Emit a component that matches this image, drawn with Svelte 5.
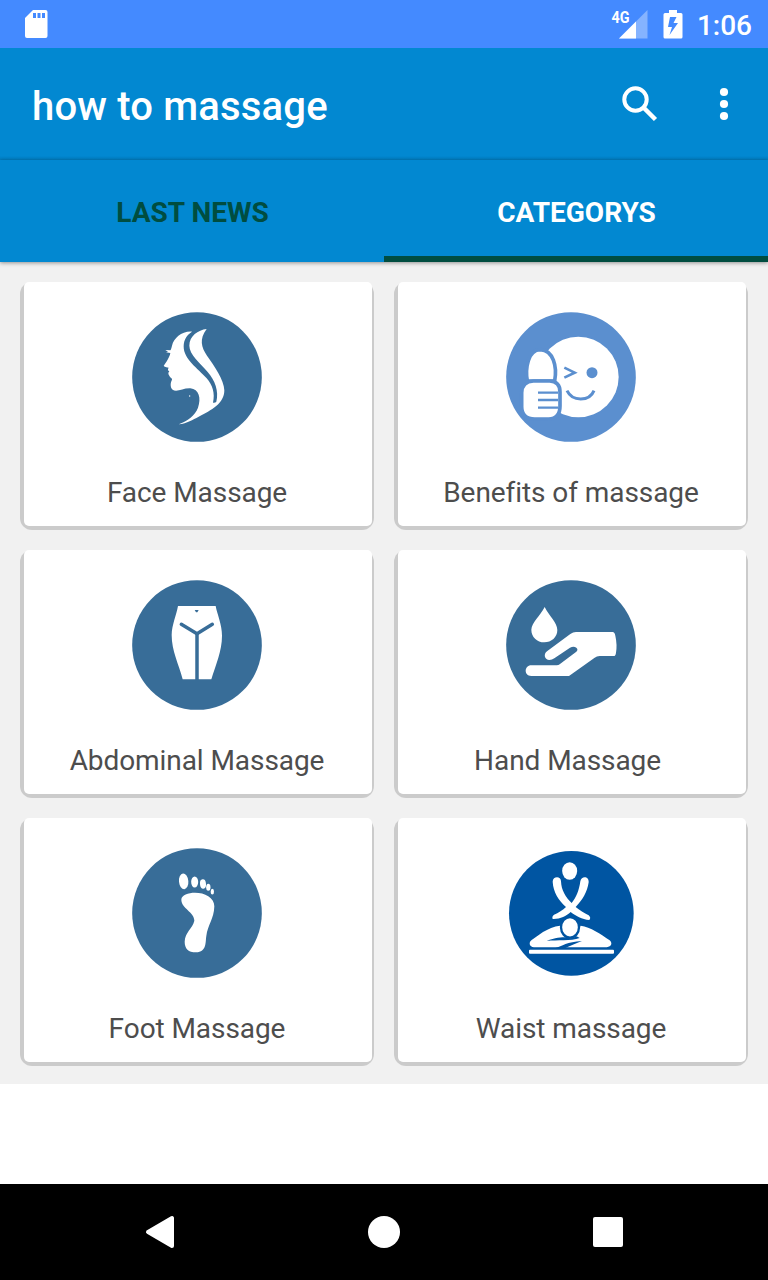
<script>
  const tabs = [
    { label: 'LAST NEWS', active: false },
    { label: 'CATEGORYS', active: true },
  ]

  const categories = [
    { name: 'Face Massage', icon: 'face' },
    { name: 'Benefits of massage', icon: 'benefits' },
    { name: 'Abdominal Massage', icon: 'abdominal' },
    { name: 'Hand Massage ', icon: 'hand' },
    { name: 'Foot Massage', icon: 'foot' },
    { name: 'Waist massage', icon: 'waist' },
  ]
</script>

<div class="screen">
  <div class="status-bar">
    <svg class="sd" width="24" height="30" viewBox="0 0 24 30">
      <path fill="#fff" fill-rule="evenodd" d="M9 1H21.500Q23.500 1 23.500 3V27Q23.500 29 21.500 29H3Q1 29 1 27V9ZM9 4V9H12V4ZM13.500 4V9H16.500V4ZM18 4V9H21V4Z" />
    </svg>
    <div class="status-right">
      <svg width="38" height="32" viewBox="0 0 38 32">
        <path fill="#fff" opacity=".35" d="M36.500 2V30.500H8Z" />
        <path fill="#fff" d="M25 13.500V30.500H8Z" />
        <text x="0.500" y="14.500" textLength="18" lengthAdjust="spacingAndGlyphs">4G</text>
      </svg>
      <svg class="battery" width="20" height="30" viewBox="0 0 20 30">
        <path fill="#fff" fill-rule="evenodd" d="M6 1H14V4H18Q19.500 4 19.500 5.500V28Q19.500 29.500 18 29.500H2Q.5 29.500 .5 28V5.500Q.5 4 2 4H6ZM7 8L5 18H9L6.500 26L15 14H10.500L13.500 8Z" />
      </svg>
      <span class="clock">1:06</span>
    </div>
  </div>

  <header class="toolbar">
    <h1>how to massage</h1>
    <svg class="search" width="38" height="38" viewBox="0 0 38 38" fill="none" stroke="#fff">
      <circle cx="14.500" cy="14.500" r="11.200" stroke-width="4" />
      <path stroke-width="4.500" d="M23 23L34.500 34.500" />
    </svg>
    <svg width="10" height="34" viewBox="0 0 10 34" fill="#fff">
      <circle cx="5" cy="5" r="4.100" />
      <circle cx="5" cy="17" r="4.100" />
      <circle cx="5" cy="29" r="4.100" />
    </svg>
  </header>

  <nav class="tabs">
    {#each tabs as tab}
      <div class="tab" class:active={tab.active}>{tab.label}</div>
    {/each}
  </nav>

  <main class="grid">
    {#each categories as category}
      <div class="card">
        <div class="card-body">
          <svg width="154" height="154" viewBox="0 0 462 462">
            {#if category.icon === 'face'}
              <circle cx="231" cy="231" r="194.500" fill="#386d98" />
              <path fill="#fff" d="M216 95C185 93 162 114 156 137C154 145 153 149 151 151L136 150L144 155L138 157L151 159C149 172 138 187 131 198C135 202 143 202 146 203C142 208 144 212 148 214C143 218 145 225 149 229C149 233 157 234 156 239C151 248 150 262 158 269C170 278 189 264 211 265C237 267 244 295 234 323C226 346 202 363 176 373C202 370 218 359 236 350C274 331 313 311 313 271C312 240 283 197 261 167C244 142 237 117 260 87C234 90 208 108 208 137C208 164 241 190 263 216C285 241 297 274 289 305Q286 309 279 308C286 280 277 254 260 235C235 207 190 177 191 139C191 118 202 104 216 95Z" />
              <circle cx="209" cy="288" r="2" fill="#fff" />
            {:else if category.icon === 'benefits'}
              <circle cx="231" cy="231" r="194.500" fill="#5b8fcf" />
              <circle cx="253" cy="231" r="121" fill="#fff" />
              <path fill="#fff" stroke="#5b8fcf" stroke-width="11" d="M100 243C93 205 102 149 139 149C178 151 190 200 182 243Z" />
              <path fill="#fff" stroke="#5b8fcf" stroke-width="11" d="M118 243H167Q198 244 198 276V318Q198 357 164 357H122Q83 356 83 320V278Q84 245 118 243Z" />
              <g fill="none" stroke="#5b8fcf" stroke-width="7">
                <path d="M132 278H192M132 300H192M132 323H192" />
                <path stroke-width="8" d="M211 203L242 218L211 233" />
                <path stroke-width="9" d="M219 272Q231 297 260 297Q290 297 300 272" />
              </g>
              <circle cx="294" cy="218" r="16.500" fill="#5b8fcf" />
            {:else if category.icon === 'abdominal'}
              <circle cx="231" cy="231" r="194.500" fill="#386d98" />
              <path fill="#fff" d="M174 114H287C292 141 306 169 306 203C306 249 287 291 274 334H188C176 287 155 249 155 201C156 169 169 143 174 114Z" />
              <g fill="none" stroke="#386d98" stroke-width="10.500" stroke-linecap="round" stroke-linejoin="round">
                <path d="M184 169L231 197L277 169" />
                <path stroke-linecap="butt" d="M231 197V336" />
              </g>
              <path fill="#386d98" d="M224 126H236L232 133H228Z" />
            {:else if category.icon === 'hand'}
              <circle cx="231" cy="231" r="194.500" fill="#386d98" />
              <path fill="#fff" d="M152 117C165 144 190 163 190 186C190 208 172 223 151 223C129 223 112 207 112 185C113 163 140 142 152 117Z" />
              <path fill="#fff" d="M356 192H246Q237 192 229 198L160 249C146 259 153 276 166 276Q174 276 181 271L228 239Q239 233 247 239Q254 245 246 252L197 289Q194 292 188 292H112C90 292 89 324 112 324H225L302 269Q308 264 317 264H359Q365 264 366 254Q370 230 364 203Q362 192 356 192Z" />
            {:else if category.icon === 'foot'}
              <circle cx="231" cy="231" r="194.500" fill="#386d98" />
              <g fill="#fff">
                <ellipse cx="191" cy="136" rx="14" ry="23.500" transform="rotate(-5 191 136)" />
                <ellipse cx="224" cy="138" rx="10.500" ry="16.500" />
                <ellipse cx="249" cy="144" rx="9" ry="14" transform="rotate(-5 249 144)" />
                <ellipse cx="265" cy="154" rx="6.500" ry="10.500" />
                <ellipse cx="277" cy="167" rx="5" ry="8.500" />
                <path d="M184 191C184 177 205 170 225 170C254 170 283 184 283 211C282 249 263 267 259 300C256 317 261 348 228 349C205 349 194 338 194 317C195 288 218 277 223 254C223 227 184 218 184 191Z" />
              </g>
            {:else}
              <circle cx="232" cy="232" r="187" fill="#0055a2" />
              <g fill="#fff">
                <ellipse cx="227" cy="105" rx="22.500" ry="26" />
                <path d="M176 137C176 120 201 119 201 136C202 163 215 184 233 201C247 184 255 164 259 136C262 118 286 120 284 139C280 168 265 193 245 213C256 222 271 231 284 238Q292 245 286 252C264 250 245 240 230 228C216 240 198 250 176 249Q173 241 180 236C193 231 207 222 216 213C194 193 178 169 176 137Z" />
                <path d="M198 269C180 271 162 279 147 288L113 312C103 319 106 333 120 334H338C353 332 356 321 347 313C319 293 290 274 260 269L249 292C242 302 219 312 206 292Z" />
                <ellipse cx="228" cy="274" rx="27" ry="31" stroke="#0055a2" stroke-width="7" />
                <rect x="105" y="341" width="255" height="12" rx="3" />
              </g>
              <g fill="#0055a2">
                <path d="M158 315C183 305 202 304 218 304Q234 310 248 301L257 306C230 316 190 311 158 315Z" />
                <path d="M184 336C205 331 218 317 264 315C246 322 230 329 214 336Z" />
              </g>
            {/if}
          </svg>
          <div class="card-title">{category.name}</div>
        </div>
      </div>
    {/each}
  </main>

  <footer class="nav-bar">
    <svg width="32" height="36" viewBox="0 0 32 36">
      <path fill="#fff" stroke="#fff" stroke-width="4" stroke-linejoin="round" d="M4 18L28 4V32Z" />
    </svg>
    <svg width="32" height="32" viewBox="0 0 32 32">
      <circle cx="16" cy="16" r="16" fill="#fff" />
    </svg>
    <svg width="32" height="32" viewBox="0 0 32 32">
      <rect x="1" y="1" width="30" height="30" rx="2" fill="#fff" />
    </svg>
  </footer>
</div>

<style>
  :global(body) {
    margin: 0;
    background: #fff;
  }

  .screen {
    display: flex;
    flex-direction: column;
    width: 768px;
    height: 1280px;
    background: #fff;
    font-family: Roboto, sans-serif;
  }

  svg {
    display: block;
    flex-shrink: 0;
  }

  .status-bar {
    display: flex;
    justify-content: space-between;
    align-items: center;
    height: 48px;
    padding: 0 16px 0 24px;
    background: #448aff;
    color: #fff;
  }

  .status-right {
    display: flex;
    align-items: center;
  }

  .status-right text {
    font-size: 17px;
    font-weight: 700;
    fill: #fff;
  }

  .battery {
    margin: 0 14px 0 14px;
  }

  .clock {
    font-size: 28px;
    font-weight: 500;
    line-height: 46px;
    padding-top: 4px;
  }

  .toolbar {
    display: flex;
    align-items: center;
    box-sizing: border-box;
    height: 112px;
    padding: 0 39px 0 32px;
    background: linear-gradient(#0288d1 108px, #027dc0 112px);
    color: #fff;
  }

  h1 {
    flex: 1;
    margin: 6px 0 0;
    font-size: 40px;
    font-weight: 500;
    letter-spacing: 0.18px;
    line-height: 48px;
  }

  .search {
    margin-right: 60px;
  }

  .tabs {
    display: flex;
    height: 102px;
    background: #0288d1;
    box-shadow: 0 1px 4px rgba(0, 0, 0, 0.4);
    z-index: 1;
  }

  .tab {
    flex: 1;
    box-sizing: border-box;
    padding: 4px 0 0 1px;
    border-bottom: 6px solid transparent;
    color: #004d40;
    font-size: 28px;
    font-weight: 700;
    line-height: 98px;
    text-align: center;
  }

  .tab.active {
    color: #fff;
    border-bottom-color: #004d40;
  }

  .grid {
    display: grid;
    grid-template-columns: repeat(2, 354px);
    gap: 20px;
    padding: 20px 20px 18px;
    background: #f1f1f1;
  }

  .card {
    box-sizing: border-box;
    height: 248px;
    padding: 0 2px 4px 4px;
    border-radius: 12px;
    background: #cbcbcb;
  }

  .card-body {
    display: flex;
    flex-direction: column;
    align-items: center;
    box-sizing: border-box;
    height: 100%;
    padding: 18px 2px 0 0;
    border-radius: 5px;
    background: #fff;
  }

  .card-title {
    margin-top: 22px;
    color: #4d4d4d;
    font-size: 28px;
    letter-spacing: -0.07px;
    line-height: 33px;
    white-space: pre;
  }

  .nav-bar {
    display: flex;
    align-items: center;
    justify-content: space-between;
    box-sizing: border-box;
    height: 96px;
    margin-top: auto;
    padding: 0 144px;
    background: #000;
  }
</style>
